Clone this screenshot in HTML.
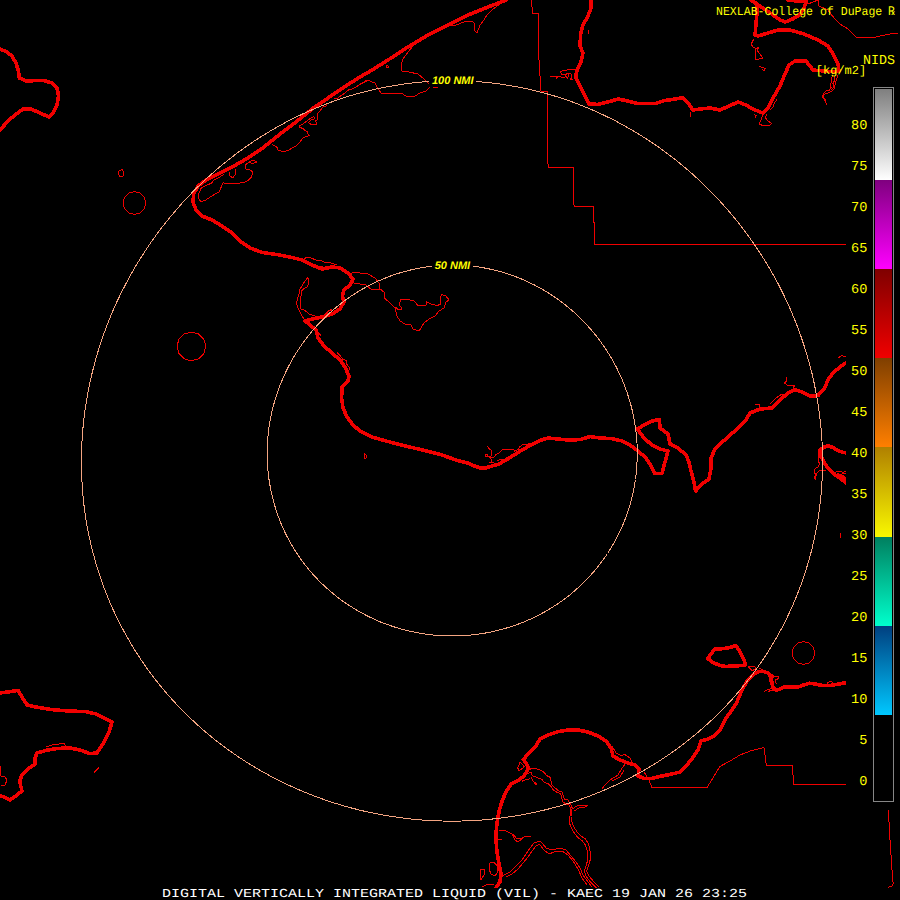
<!DOCTYPE html>
<html><head><meta charset="utf-8"><title>DIGITAL VERTICALLY INTEGRATED LIQUID (VIL) - KAEC</title>
<style>
html,body{margin:0;padding:0;background:#000;width:900px;height:900px;overflow:hidden}
svg{display:block}
.tk{fill:none;stroke:#f00000;stroke-width:3.6;stroke-linejoin:round;stroke-linecap:round}
.tn{fill:none;stroke:#f00000;stroke-width:1;stroke-linejoin:round;stroke-linecap:round}
.rg{fill:none;stroke:#f4a582;stroke-width:1}
.lb{font-family:"Liberation Mono","DejaVu Sans Mono",monospace;font-size:13.6px;fill:#ffff00}
.yl{font-family:"Liberation Mono","DejaVu Sans Mono",monospace;fill:#ffff00}
.rl{font-family:"Liberation Sans",sans-serif;font-weight:bold;font-style:italic;font-size:11px;fill:#ffff00}
.ttl{font-family:"Liberation Mono","DejaVu Sans Mono",monospace;font-size:12.2px;fill:#ffffff}
</style></head><body>
<svg width="900" height="900" viewBox="0 0 900 900" shape-rendering="crispEdges" text-rendering="geometricPrecision">
<defs>
<clipPath id="mapclip"><path d="M0 0H900V45H846V808H900V888H0Z"/></clipPath>
<linearGradient id="g1" x1="0" y1="0" x2="0" y2="1"><stop offset="0" stop-color="#7f7f7f"/><stop offset="1" stop-color="#ffffff"/></linearGradient>
<linearGradient id="g2" x1="0" y1="0" x2="0" y2="1"><stop offset="0" stop-color="#7f007f"/><stop offset="1" stop-color="#ff00ff"/></linearGradient>
<linearGradient id="g3" x1="0" y1="0" x2="0" y2="1"><stop offset="0" stop-color="#7f0000"/><stop offset="1" stop-color="#f00000"/></linearGradient>
<linearGradient id="g4" x1="0" y1="0" x2="0" y2="1"><stop offset="0" stop-color="#7f3f00"/><stop offset="1" stop-color="#ff7f00"/></linearGradient>
<linearGradient id="g5" x1="0" y1="0" x2="0" y2="1"><stop offset="0" stop-color="#b08000"/><stop offset="1" stop-color="#f9f800"/></linearGradient>
<linearGradient id="g6" x1="0" y1="0" x2="0" y2="1"><stop offset="0" stop-color="#007f5f"/><stop offset="1" stop-color="#00ffcc"/></linearGradient>
<linearGradient id="g7" x1="0" y1="0" x2="0" y2="1"><stop offset="0" stop-color="#003f7f"/><stop offset="1" stop-color="#00c8ff"/></linearGradient>
</defs>
<rect x="0" y="0" width="900" height="900" fill="#000"/>
<g clip-path="url(#mapclip)">
<!-- coastlines / borders: thin -->
<path class="tn" d="M119,171 L122,169.6 L123.6,172 L123.4,176 L120,176.6 L118.6,174 Z"/>
<path class="tn" d="M500,4 L492,10 L487,15 L484,20 L480,25 L477,33 L474.4,30 L475,24 L472,21 L464,22 L456,25 L448,26"/>
<path class="tn" d="M414,45 L408,52 L403,59 L401,65 L402,71 L409,72 L418,74 L424,79 L429,84 L429,88 L426,91 L420,93 L415,96 L406,96 L402,93.6 L382,94 L378,89 L375,83 L368,80.4 L360,84"/>
<path class="tn" d="M386,65 L388,66 L388,68 L386,67 Z"/>
<path class="tn" d="M433,87.4 L438,87.4"/>
<path class="tn" d="M531.6,0 L532.4,13 L538.6,13 L538.6,45 L539.4,74 L540,75.6 L541,91 L547.6,91 L547.6,161 L548.4,167.4 L573.6,167.4 L573.6,204 L574.4,206 L593.4,206 L593.4,222 L594.4,222 L594.4,244.4 L847,244.4"/>
<path class="tn" d="M588,30 L588,34"/>
<path class="tn" d="M690,112 L690,117"/>
<path class="tn" d="M818,0 L819,6 L828,10 L834,18 L840,24 L848,29 L856,37 L864,37 L872,38 L880,36 L890,34 L898,33"/>
<path class="tn" d="M808,4 L818,0"/>
<path class="tn" d="M145.8,203 L144.3,208.7 L140.1,212.9 L134.4,214.4 L128.7,212.9 L124.5,208.7 L123,203 L124.5,197.3 L128.7,193.1 L134.4,191.6 L140.1,193.1 L144.3,197.3 Z"/>
<path class="tn" d="M205.8,346.4 L203.9,353.6 L198.6,358.9 L191.4,360.8 L184.2,358.9 L178.9,353.6 L177,346.4 L178.9,339.2 L184.2,333.9 L191.4,332 L198.6,333.9 L203.9,339.2 Z"/>
<path class="tn" d="M814.8,653 L813.3,658.7 L809.1,662.9 L803.4,664.4 L797.7,662.9 L793.5,658.7 L792,653 L793.5,647.3 L797.7,643.1 L803.4,641.6 L809.1,643.1 L813.3,647.3 Z"/>
<path class="tn" d="M318,332 L321,336"/>
<path class="tn" d="M352,273 L356,272 L360,273 L368,274 L375,278 L379,283 L380,289 L372,290 L366,285 L360,284 L354,283 L351,278 Z"/>
<path class="tn" d="M380,289 L384,292 L384,298 L388,301 L392,305 L395,308 L397,316 L400,321 L405,324 L411,325 L413,329 L419,331 L421,328 L424,323 L429,319 L435,316 L439,311 L444,308 L446,302 L449,300 L446,296 L442,294.6 L440,298 L441,304 L437,305.6 L431,304 L426,301.6 L426,305 L418,305.6 L414,301 L408,299.6 L401,299.6 L399,304 L402,309 L399,310 L395,307"/>
<path class="tn" d="M364.4,454 L366,454.6 L366.4,458 L364.6,458.4 Z"/>
<path class="tn" d="M786,377 L787,381 L784,383 L789,386 L795,385 L793,388"/>
<path class="tn" d="M755,405 L759,404.4 L760,408"/>
<path class="tn" d="M770,404 L776,398 L782,394 L786,394"/>
<path class="tn" d="M840,533 L840.6,538"/>
<path class="tn" d="M838,358 L842,355.6 L846,357"/>
<path class="tn" d="M46,747 L54,744.4 L64,743.6 L66,747"/>
<path class="tn" d="M0,766 L1,776 L5,777 L7,780 L5,785 L1,785"/>
<path class="tn" d="M94,772.4 L99,767.6"/>
<path class="tn" d="M499,830 L506,831 L512,834 L515,840 L518,842 L524,837 L531,836 L526,836 L520,839 L516,838 L513,834"/>
<path class="tn" d="M498,839 L502,839"/>
<path class="tn" d="M540,841 L534,843 L530,848 L526,854 L522,860 L516,866 L510,872 L504,875 L501,878"/>
<path class="tn" d="M540,844 L536,846 L532,851 L528,857 L523,863 L518,869 L512,874 L506,877"/>
<path class="tn" d="M490,863 L494,862 L497,866 L498,872 L495,876 L491,874 L489,869 Z"/>
<path class="tn" d="M480,870 L484,869 L484,875 L481,880 L480,876 Z"/>
<path class="tn" d="M482,887 L488,884 L494,884"/>
<path class="tn" d="M644,772 L649,780 L652,788 L707,787.6 L720,766.4 L730,761 L740,755 L752,750.4 L764,747.6 L766.4,765.6 L792.4,765.6 L793.6,784.4 L847,784.4"/>
<path class="tn" d="M612,746 L616,753 L622,756 L624,754 L630,758 L632,762"/>
<path class="tn" d="M626,763 L622,768 L618,775 L610,780 L604,786 L602,789"/>
<path class="tn" d="M624,770 L620,777 L612,781"/>
<path class="tn" d="M572,809 L577,806 L583,805 L588,805.6 L585,807 L579,808 L574,811"/>
<path class="tn" d="M540,841 L543,844 L546,848 L552,850 L560,848 L566,850 L571,856 L576,862 L580,868 L583,875 L588,882 L592,887"/>
<path class="tn" d="M540,845 L544,850 L549,854 L554,852 L562,851 L568,855 L573,861 L578,869 L582,878 L587,885"/>
<path class="tn" d="M888.4,810.4 L890,840 L892,870 L893.2,884 L892,886.4 L888,887.2"/>
<path class="tn" d="M370,80 L366,80 L364,82.5 L360,84.5 L356,87 L352,89 L349,89.5 L345,93 L341,95.5 L338,98 L334,99"/>
<path class="tn" d="M327,104 L326,106 L323,107 L320,111 L317,114 L318,117 L317,120 L315,121 L317,123 L316,124.5 L311,124.5 L308.5,122.5 L311,120 L314,119 L314,116.5 L311,118 L307,121 L303,124 L299.5,126 L300,127.5 L303,128.5 L305,130.5 L307.5,131.5 L308,134 L309.5,135.5 L306,136.5 L302.5,138.5 L300,142 L296,146 L290,149.3 L287.3,150.7 L283.3,152 L278,150 L276.7,146.7 L272.7,144.7"/>
<path class="tn" d="M248.7,162 L252.7,160 L256.7,162 L253.3,163.3 L248.7,162.7 L245.3,164.7 L246,169.3 L250,170 L252.7,172 L251.3,177.3 L248.7,180 L243.3,182.7 L236.7,183.3 L231.3,183.3 L227.3,184 L223.3,182.7 L221.3,186.7 L219.3,192 L214,194.7 L208.7,198 L204.7,200.7 L200.7,201.3 L198.7,198.7 L198.7,193.3 L201.3,188 L206,185.3 L211.3,183.3 L214,180 L219.3,177.3 L223.3,174.7"/>
<path class="tn" d="M229.3,172 L230,176 L232.7,178 L235.3,174.7 L236,168.7"/>
<path class="tn" d="M753.4,39.8 L751.6,43.4 L752.2,46.5 L755.3,48.3 L755.3,59.3 L762,58.7 L762.6,57.5 L758.3,52 L757.1,49.6 L758.9,47.7 L755.3,48.3"/>
<path class="tn" d="M759.6,66.7 L762.6,67.3 L765.1,68.5 L763.8,71 L762.6,69.1"/>
<path class="tn" d="M837.8,75.2 L836.6,78.9 L835.4,83.8 L834.1,88.7 L831.7,91.1 L828,93 L825.6,93.6 L823.1,96 L824.4,99.1 L825.6,102.1 L826.8,104.6"/>
<path class="tn" d="M832.9,75.2 L831.1,78.3 L831.7,81.3 L829.9,85 L831.1,87.5 L829.2,90.5 L825.6,91.1 L823.7,93.6 L821.9,97.2 L824.4,98.5 L825.6,100.3"/>
<path class="tn" d="M834.1,76.5 L834.7,80.1 L832.9,83.8 L833.5,87.5 L831.1,89.9"/>
<path class="tn" d="M754.1,114.4 L756.5,115.6 L755.3,117.4"/>
<path class="tn" d="M762.6,115.6 L760.8,120.5 L758.9,124.1 L762.6,125.4 L769.3,125.4 L771.8,123.5 L767.5,120.5 L765.7,118 L766.3,114.4"/>
<path class="tn" d="M776.7,99.7 L774.2,103.4 L773,107 L770.6,109.5"/>
<path class="tn" d="M528.9,769.4 L533.3,768.3 L538.9,769.4 L543.3,771.7 L546.7,775.6 L550,777.2 L551.1,781.1 L552.2,785.6 L555.6,788.3 L558.9,791.1 L562.2,792.2 L563.3,795.6 L564.4,799.4 L567.8,800 L570,803.3 L572.2,807.8 L571,816 L571.1,820 L574,827 L577.3,832.4 L581,836 L585.1,838.7 L588,843 L589.8,848 L590.5,858.9 L588.2,866.7 L586.6,871.3 L589,876 L592.9,880.7 L599.1,887"/>
<path class="tn" d="M527.8,773.3 L531.1,772.2 L532.2,775.6 L537.8,777.8 L542.2,779.4 L544.4,782.8 L547.8,783.3 L551.1,786.7 L553.3,790 L556.7,792.2 L560,793.3 L561.7,796.7 L562.2,801.1 L565.6,803.9 L568.9,804.4 L570.6,808.9 L570.6,813.3 L569.5,818 L569,822 L571.5,828 L574.5,833.5 L578,837.5 L582,840.5 L585,844.5 L587,849.5 L588,859 L586,866 L584.3,871.5 L586.5,877 L590,881.5 L596,887.5"/>
<path class="tn" d="M520,762.2 L517.8,767.8 L518.9,771.1 L524.4,766.7 L521.1,763.3 Z"/>
<path class="tn" d="M531.1,777.8 L533.3,781.1 L535.6,785 L536.7,784.4 L535,782.2"/>
<path class="tn" d="M522.2,781.1 L526.7,779.4 L530,778.9"/>
<path class="tn" d="M304,258.5 L307,257.5 L311,258 L316,260 L322,261 L326,263 L330,262.5 L334,264 L337,265"/>
<path class="tn" d="M307,261.5 L311,263.5 L315,264.5 L318,266 L323,266.5"/>
<path class="tn" d="M307.5,278 L305,281 L302.5,285 L300,289 L299,294 L297.5,299 L296.5,304 L298,308 L300,312 L302.5,317 L304,319"/>
<path class="tn" d="M307.5,278 L309,280 L308.5,284 L307,287 L303.5,289 L301.5,291 L301,296 L300,300 L300,305 L301,309 L304,310 L307,312 L309.5,314.5 L315,315.5"/>
<path class="tn" d="M326,313.5 L329,310.5 L332,309.5 L331,312"/>
<path class="tn" stroke-width="2" d="M550.3,76.5 L555,76.8 L560.3,76"/>
<path class="tn" d="M560.3,72.3 L561.7,71 L565,70.7 L569,69.3 L574.3,69.3"/>
<path class="tn" d="M560.3,72.3 L561.7,74.3 L565,75 L567,73.7 L569.7,73.3 L571.7,74.7 L571.7,77.7 L570.3,79 L573,79.3"/>
<path class="tn" d="M565,75 L566.3,77 L567.7,78.3 L568.3,75.7 L568,74.3"/>
<path class="tn" d="M556.3,78.3 L558.3,76.3 L561,77 L564.3,77.3"/>
<path class="tn" d="M818.3,454.7 L818.3,462 L819.7,463.3 L818.3,466.7 L814.3,469.3 L814.3,472.7 L816.3,474.7 L815,479.3 L814.3,476.7 L817,473.3 L820.3,470 L825.7,470"/>
<path class="tn" stroke-width="2" d="M815,477 L815.3,479.5"/>
<path class="tn" d="M834.3,472.7 L837.7,471 L841,471.7 L843,472.3 L847,471.3"/>
<path class="tn" d="M841,475.3 L843,473.3 L847,473.7"/>
<path class="tn" d="M487.8,446.9 L489.1,448.7 L491.3,450.4 L491.3,455.8 L490.4,457.6 L493.6,457.6 L495.8,454.9 L499.3,452.7 L503.3,449.1 L513.6,449.1 L514.4,451.3 L518,449.6 L519.8,446.9 L523.3,444.2 L527.8,444.2 L531.3,443.3"/>
<path class="tn" d="M485.1,454.4 L487.3,454.4 L487.3,456.7 L485.1,456.7 Z"/>
<path class="tn" d="M487.3,456 L489.1,456.7 L491.3,459.3 L492.2,461.1 L489.6,462.9 L493.1,462.4"/>
<path class="tn" d="M497.6,460.2 L503.8,459.3 L499.3,462.9"/>
<path class="tn" d="M748.3,666.7 L755,666.7 L755.7,668.7 L752.3,670.7 L749.7,668 Z"/>
<path class="tn" d="M759.7,668.7 L763,669.3 L761.7,671.3"/>
<path class="tn" d="M773.7,676 L779,676 L777.7,679.3 L775,680 L776.3,684"/>
<path class="tn" d="M763.7,692 L767,690 L771,688.7 L773.7,690 L768.3,691.3"/>
<path class="tn" d="M827,683.3 L829.7,681.3 L832.3,682 L833,684"/>
<path class="tn" d="M337.3,352.7 L340,355.3 L342.7,359.3 L346.7,360.7 L346,363.3 L349.3,367.3 L350,370"/>
<!-- coastlines: thick -->
<path class="tk" stroke-width="3.2" d="M0,49 L6,51.6 L12,56 L16,63 L18.4,71 L19.4,78 L26,81 L35,80.6 L44,80.6 L52,83 L57,88 L58.6,96 L57,105 L53,113 L49,117 L40,113 L31,109 L23,109 L15,115 L8,121 L0,130"/>
<path class="tk" stroke-width="4.7" d="M506,0 L488,7 L468,15 L448,25 L428,35 L408,47 L388,60 L372,70 L360,77 L344,87 L328,98 L312,109 L296,122 L280,134 L264,147 L248,158 L232,167 L216,175 L206,180 L198,186 L193.6,194 L193,202 L196,210 L202,216 L212,220 L222,226 L232,233 L240,241 L250,248 L262,252.4 L276,254.4 L290,257 L302,260"/>
<path class="tk" stroke-width="3.9" d="M302,260 L312,265 L322,269 L332,267 L340,268 L348,273 L353,279 L350,285 L344,290 L342.4,296 L344,302 L340,309 L332,314 L322,317 L312,319 L305,321 L310,325 L316,330 L318,338 L324,346 L332,353 L340,360 L345,367 L349,376 L348,381 L342,387 L341.6,398 L343,408 L347,417 L353,425 L360,431 L372,437 L386,441 L400,444.6 L414,448 L428,451.4 L442,455 L456,460 L468,463.2 L474.4,466 L479.8,467.8 L486,467.8 L492.2,466 L498.4,464.2 L505.6,460.2 L512.7,455.8 L519.8,451.3 L526.9,447.3 L534,443.3 L540,440.4"/>
<path class="tk" stroke-width="3.6" d="M540,440.4 L548,438 L558,439 L568,440 L580,439.6 L590,436.6 L600,438 L612,438.6 L622,441 L630,445 L638,451 L646,458 L651,466 L655,473.6 L662,473.6 L665,462 L668,451 L660,449 L652,445 L645,439 L640,433 L637.4,429 L644,425 L652,421 L659.4,419.6 L660,428 L668,434 L670,444 L678,448 L686,455 L689,462 L691,471 L694,482 L695.6,491 L702,484 L709,479 L711,468 L711,458 L715,449 L720,444 L728,437 L738,428 L746,420 L750,413 L760,409 L772,408 L780,400 L788,393 L795,389.6 L802,392 L810,396 L818,395.6 L824,389 L829,378 L834,372 L840,367 L847,362"/>
<path class="tk" stroke-width="3.4" d="M847,453.2 L841.7,452 L837,450 L832.3,447.3 L827.7,445.7 L823.7,447.3 L820,450 L819.7,453.3 L821,456.7 L823,460 L825,464 L827.7,468 L831.7,472 L835.7,475.3 L840.3,478.3 L847,483.5"/>
<path class="tk" stroke-width="3" d="M838,475 L842,476.5 L847,479.5"/>
<path class="tk" stroke-width="3.2" d="M591,0 L591,8 L588,16 L583,25 L580.6,34 L580,46 L583,53 L581,62 L577,70 L575.6,77 L579,84 L584,94 L589,104 L598,104.4 L608,102 L618,99 L628,101 L638,103.6 L655,103.6 L664,100.6 L673,99.4 L683,97.6 L689,104 L693,110 L700,109 L710,108 L720,110"/>
<path class="tk" stroke-width="4.0" d="M720,110 L729,106 L738,102 L746,105 L754,109.6 L763,113 L768,108 L773,98 L780,86 L785,74 L789,65 L795,61 L806,61 L813,70 L824,71 L835,72 L839,71 L838,64 L833,54 L828,46 L818,40 L804,34 L790,30 L778,30 L768,33 L758,36 L755,35 L756,24 L757,12 L757,4 L752,0"/>
<path class="tk" stroke-width="3.2" d="M750.7,0 L760,6 L770.7,13.3 L780,20 L785.3,22 L793.3,18.7 L800,14.7 L804,8 L806,2.7 L806.7,0"/>
<path class="tk" stroke-width="3.2" d="M788,0 L798.7,1.3 L806.7,1.3"/>
<path class="tk" d="M720,649 L728,648 L736,645.6 L740,652 L744,660 L745.6,665 L736,666 L726,666.4 L720,665.6 L712,662 L707.6,658.4 L711,654 L715,649 Z"/>
<path class="tk" stroke-width="3.8" d="M847,682.5 L839,684 L831,685.3 L821.7,685.3 L815,684 L809.7,683.3 L804.3,684.7 L799,686.7 L791,686.7 L784.3,686.7 L779,689.3 L776.3,690 L773,686.7 L771,681.3 L770.3,676 L768.3,673.3 L763.7,671.3 L759,671.3 L755,673.3 L751,676.7 L747,681.3 L743,688 L739.7,695.3 L736.3,703.3 L732,710 L726,718 L720,730 L714,736 L708,739 L701,741 L698,750 L692,759 L686,766 L680,772 L672,774 L662,776 L652,778.4 L644,778.4 L638,776 L639,769 L635,765 L628,763 L620,760 L613,756 L611,748 L606,741 L598,736 L588,732 L578,730 L568,730 L558,731.6 L548,735 L540,739"/>
<path class="tk" stroke-width="3.2" d="M540,739 L535.6,746.7 L528.9,753.3 L523.3,759.4 L526.7,763.9 L528.3,767.8 L526.7,772.2 L523.3,776.7 L517.8,780.6 L511.1,783.9 L507.8,788.9 L504.4,795.6 L501.7,802.2 L499.4,810 L497.8,817.8 L496.7,825.6 L496.1,833.3 L496,840 L497,852 L499,864 L501,874 L500,882 L496,888"/>
<path class="tk" stroke-width="3.2" d="M0,693 L8,692 L18,690.4 L22,697 L27,705 L36,707 L52,709.6 L68,711 L86,711.6 L96,714 L104,718 L112,722 L109,732 L104,742 L97,753 L90,753.6 L80,750 L70,748 L58,748.4 L46,750.4 L37,753 L35,758 L35,764 L28,769 L22,775 L19.6,781 L21,787 L22,791 L17,795 L10,800 L4,797 L0,795.6"/>
<path class="tk" stroke-width="2.5" d="M772.5,686 L771.5,680 L772,676"/>
</g>
<!-- range rings -->
<polygon class="rg" points="822.4,450.9 822.5,460.6 822.4,470.3 822.1,479.9 821.5,489.6 820.6,499.2 819.5,508.8 818.1,518.4 816.5,527.9 814.6,537.3 812.5,546.7 810.1,556.0 807.4,565.3 804.6,574.5 801.4,583.6 798.0,592.6 794.4,601.5 790.5,610.3 786.4,619.0 782.1,627.5 777.5,636.0 772.6,644.3 767.6,652.5 762.3,660.6 756.8,668.5 751.1,676.3 745.2,683.9 739.0,691.3 732.7,698.6 726.1,705.7 719.3,712.7 712.4,719.4 705.2,726.0 697.9,732.4 690.4,738.6 682.7,744.6 674.9,750.4 666.9,756.0 658.7,761.4 650.4,766.5 641.9,771.5 633.3,776.2 624.5,780.8 615.7,785.0 606.7,789.1 597.6,792.9 588.4,796.5 579.0,799.9 569.6,803.0 560.1,805.9 550.6,808.5 540.9,810.9 531.2,813.0 521.4,814.9 511.6,816.5 501.7,817.9 491.8,819.1 481.9,820.0 471.9,820.6 462.0,821.0 452.0,821.1 442.0,821.0 432.0,820.6 422.1,820.0 412.1,819.1 402.2,817.9 392.3,816.5 382.5,814.9 372.7,813.0 363.0,810.9 353.4,808.5 343.8,805.9 334.3,803.0 324.9,799.9 315.6,796.5 306.4,792.9 297.3,789.1 288.3,785.0 279.4,780.8 270.7,776.2 262.0,771.5 253.6,766.5 245.3,761.4 237.1,756.0 229.1,750.4 221.2,744.6 213.5,738.6 206.0,732.4 198.7,726.0 191.6,719.4 184.6,712.7 177.8,705.7 171.3,698.6 164.9,691.3 158.8,683.9 152.8,676.3 147.1,668.5 141.6,660.6 136.3,652.5 131.3,644.3 126.5,636.0 121.9,627.5 117.5,619.0 113.4,610.3 109.5,601.5 105.9,592.6 102.5,583.6 99.4,574.5 96.5,565.3 93.9,556.0 91.5,546.7 89.3,537.3 87.4,527.9 85.8,518.4 84.4,508.8 83.3,499.2 82.5,489.6 81.9,479.9 81.5,470.3 81.4,460.6 81.6,450.9 82.0,441.2 82.6,431.5 83.6,421.9 84.7,412.2 86.2,402.6 87.8,393.0 89.7,383.4 91.9,373.9 94.3,364.5 96.9,355.1 99.8,345.8 102.9,336.5 106.2,327.3 109.8,318.2 113.6,309.2 117.6,300.3 121.9,291.5 126.4,282.8 131.0,274.3 135.9,265.8 141.0,257.5 146.3,249.3 151.8,241.2 157.5,233.3 163.4,225.5 169.5,217.9 175.7,210.5 182.1,203.2 188.7,196.1 195.5,189.1 202.5,182.4 209.6,175.8 216.8,169.4 224.2,163.2 231.8,157.2 239.4,151.4 247.3,145.8 255.2,140.4 263.3,135.3 271.5,130.3 279.8,125.6 288.2,121.0 296.7,116.8 305.4,112.7 314.1,108.9 322.9,105.3 331.8,101.9 340.7,98.8 349.7,95.9 358.8,93.3 368.0,90.9 377.2,88.8 386.4,86.9 395.7,85.3 405.0,83.9 414.4,82.7 423.8,81.8 433.2,81.2 442.6,80.8 452.0,80.7 461.4,80.8 470.8,81.2 480.2,81.8 489.6,82.7 498.9,83.9 508.2,85.3 517.5,86.9 526.8,88.8 536.0,90.9 545.1,93.3 554.2,95.9 563.2,98.8 572.2,101.9 581.1,105.3 589.9,108.9 598.6,112.7 607.2,116.8 615.7,121.0 624.1,125.6 632.4,130.3 640.6,135.3 648.7,140.4 656.7,145.8 664.5,151.4 672.2,157.2 679.7,163.2 687.1,169.4 694.4,175.8 701.5,182.4 708.4,189.1 715.2,196.1 721.8,203.2 728.2,210.5 734.5,217.9 740.6,225.5 746.4,233.3 752.1,241.2 757.6,249.3 762.9,257.5 768.0,265.8 772.9,274.3 777.6,282.8 782.0,291.5 786.3,300.3 790.3,309.2 794.1,318.2 797.7,327.3 801.0,336.5 804.1,345.8 807.0,355.1 809.7,364.5 812.1,373.9 814.2,383.4 816.1,393.0 817.8,402.6 819.2,412.2 820.4,421.9 821.3,431.5 822.0,441.2"/>
<polygon class="rg" points="637.3,450.5 637.2,457.8 636.9,465.1 636.3,472.3 635.5,479.5 634.3,486.7 632.8,493.8 631.1,500.9 629.1,507.8 626.8,514.7 624.3,521.5 621.4,528.2 618.3,534.7 615.0,541.1 611.4,547.4 607.5,553.5 603.4,559.5 599.0,565.3 594.4,571.0 589.6,576.4 584.6,581.7 579.3,586.7 573.9,591.5 568.3,596.2 562.4,600.6 556.4,604.7 550.3,608.6 543.9,612.3 537.5,615.8 530.9,618.9 524.1,621.9 517.3,624.5 510.3,626.9 503.2,629.0 496.1,630.8 488.9,632.4 481.6,633.7 474.3,634.7 467.0,635.4 459.6,635.8 452.2,636.0 444.8,635.8 437.5,635.4 430.1,634.7 422.8,633.7 415.6,632.4 408.3,630.8 401.2,629.0 394.2,626.9 387.2,624.5 380.3,621.9 373.6,618.9 367.0,615.8 360.5,612.3 354.2,608.6 348.0,604.7 342.0,600.6 336.2,596.2 330.6,591.5 325.1,586.7 319.9,581.7 314.8,576.4 310.0,571.0 305.4,565.3 301.1,559.5 297.0,553.5 293.1,547.4 289.5,541.1 286.1,534.7 283.0,528.2 280.2,521.5 277.6,514.7 275.4,507.8 273.4,500.9 271.6,493.8 270.2,486.7 269.0,479.5 268.1,472.3 267.5,465.1 267.2,457.8 267.2,450.5 267.5,443.2 268.0,436.0 268.8,428.7 269.9,421.5 271.3,414.3 273.0,407.2 274.9,400.2 277.2,393.2 279.6,386.3 282.4,379.5 285.4,372.9 288.6,366.3 292.1,359.9 295.8,353.6 299.8,347.5 304.0,341.5 308.4,335.7 313.0,330.1 317.9,324.6 322.9,319.4 328.1,314.3 333.6,309.5 339.2,304.9 344.9,300.5 350.8,296.3 356.9,292.4 363.1,288.7 369.5,285.3 375.9,282.1 382.5,279.2 389.2,276.5 395.9,274.1 402.8,272.0 409.7,270.2 416.7,268.6 423.8,267.3 430.8,266.3 438.0,265.6 445.1,265.2 452.2,265.0 459.4,265.2 466.5,265.6 473.6,266.3 480.7,267.3 487.7,268.6 494.7,270.2 501.7,272.0 508.5,274.1 515.3,276.5 522.0,279.2 528.5,282.1 535.0,285.3 541.3,288.7 547.6,292.4 553.6,296.3 559.5,300.5 565.3,304.9 570.9,309.5 576.3,314.3 581.5,319.4 586.6,324.6 591.4,330.1 596.1,335.7 600.5,341.5 604.7,347.5 608.6,353.6 612.4,359.9 615.9,366.3 619.1,372.9 622.1,379.5 624.8,386.3 627.3,393.2 629.5,400.2 631.5,407.2 633.1,414.3 634.5,421.5 635.6,428.7 636.5,436.0 637.0,443.2"/>
<rect x="429" y="74" width="47" height="13" fill="#000"/>
<rect x="432" y="259" width="41" height="13" fill="#000"/>
<text class="rl" x="452.8" y="84" text-anchor="middle">100 NMI</text>
<text class="rl" x="452.4" y="269" text-anchor="middle">50 NMI</text>
<!-- colour bar -->
<rect x="873.5" y="87.5" width="20" height="714" fill="#000" stroke="#868686" stroke-width="1"/>
<rect x="875" y="89" width="17" height="91" fill="url(#g1)"/>
<rect x="875" y="180" width="17" height="89" fill="url(#g2)"/>
<rect x="875" y="269" width="17" height="89" fill="url(#g3)"/>
<rect x="875" y="358" width="17" height="89" fill="url(#g4)"/>
<rect x="875" y="447" width="17" height="90" fill="url(#g5)"/>
<rect x="875" y="537" width="17" height="89" fill="url(#g6)"/>
<rect x="875" y="626" width="17" height="89" fill="url(#g7)"/>
<text class="lb" x="867.4" y="784.7" text-anchor="end">0</text>
<text class="lb" x="867.4" y="743.7" text-anchor="end">5</text>
<text class="lb" x="867.4" y="702.7" text-anchor="end">10</text>
<text class="lb" x="867.4" y="661.7" text-anchor="end">15</text>
<text class="lb" x="867.4" y="620.7" text-anchor="end">20</text>
<text class="lb" x="867.4" y="579.7" text-anchor="end">25</text>
<text class="lb" x="867.4" y="538.7" text-anchor="end">30</text>
<text class="lb" x="867.4" y="497.7" text-anchor="end">35</text>
<text class="lb" x="867.4" y="456.7" text-anchor="end">40</text>
<text class="lb" x="867.4" y="415.7" text-anchor="end">45</text>
<text class="lb" x="867.4" y="374.7" text-anchor="end">50</text>
<text class="lb" x="867.4" y="333.7" text-anchor="end">55</text>
<text class="lb" x="867.4" y="292.7" text-anchor="end">60</text>
<text class="lb" x="867.4" y="251.7" text-anchor="end">65</text>
<text class="lb" x="867.4" y="210.7" text-anchor="end">70</text>
<text class="lb" x="867.4" y="169.7" text-anchor="end">75</text>
<text class="lb" x="867.4" y="128.7" text-anchor="end">80</text>

<text class="yl" x="716" y="15" font-size="12.2" textLength="166.3" lengthAdjust="spacingAndGlyphs">NEXLAB-College of DuPage</text>
<text class="yl" x="887.8" y="15" font-size="12.2" textLength="7.2" lengthAdjust="spacingAndGlyphs">&#8478;</text>
<text class="yl" x="863" y="64" font-size="13.6" textLength="32" lengthAdjust="spacingAndGlyphs">NIDS</text>
<text class="yl" x="815.8" y="73.5" font-size="12.2" textLength="50.4" lengthAdjust="spacingAndGlyphs">[kg/m2]</text>
<text class="ttl" x="162" y="897" textLength="585" lengthAdjust="spacingAndGlyphs">DIGITAL VERTICALLY INTEGRATED LIQUID (VIL) - KAEC 19 JAN 26 23:25</text>
</svg>
</body></html>
